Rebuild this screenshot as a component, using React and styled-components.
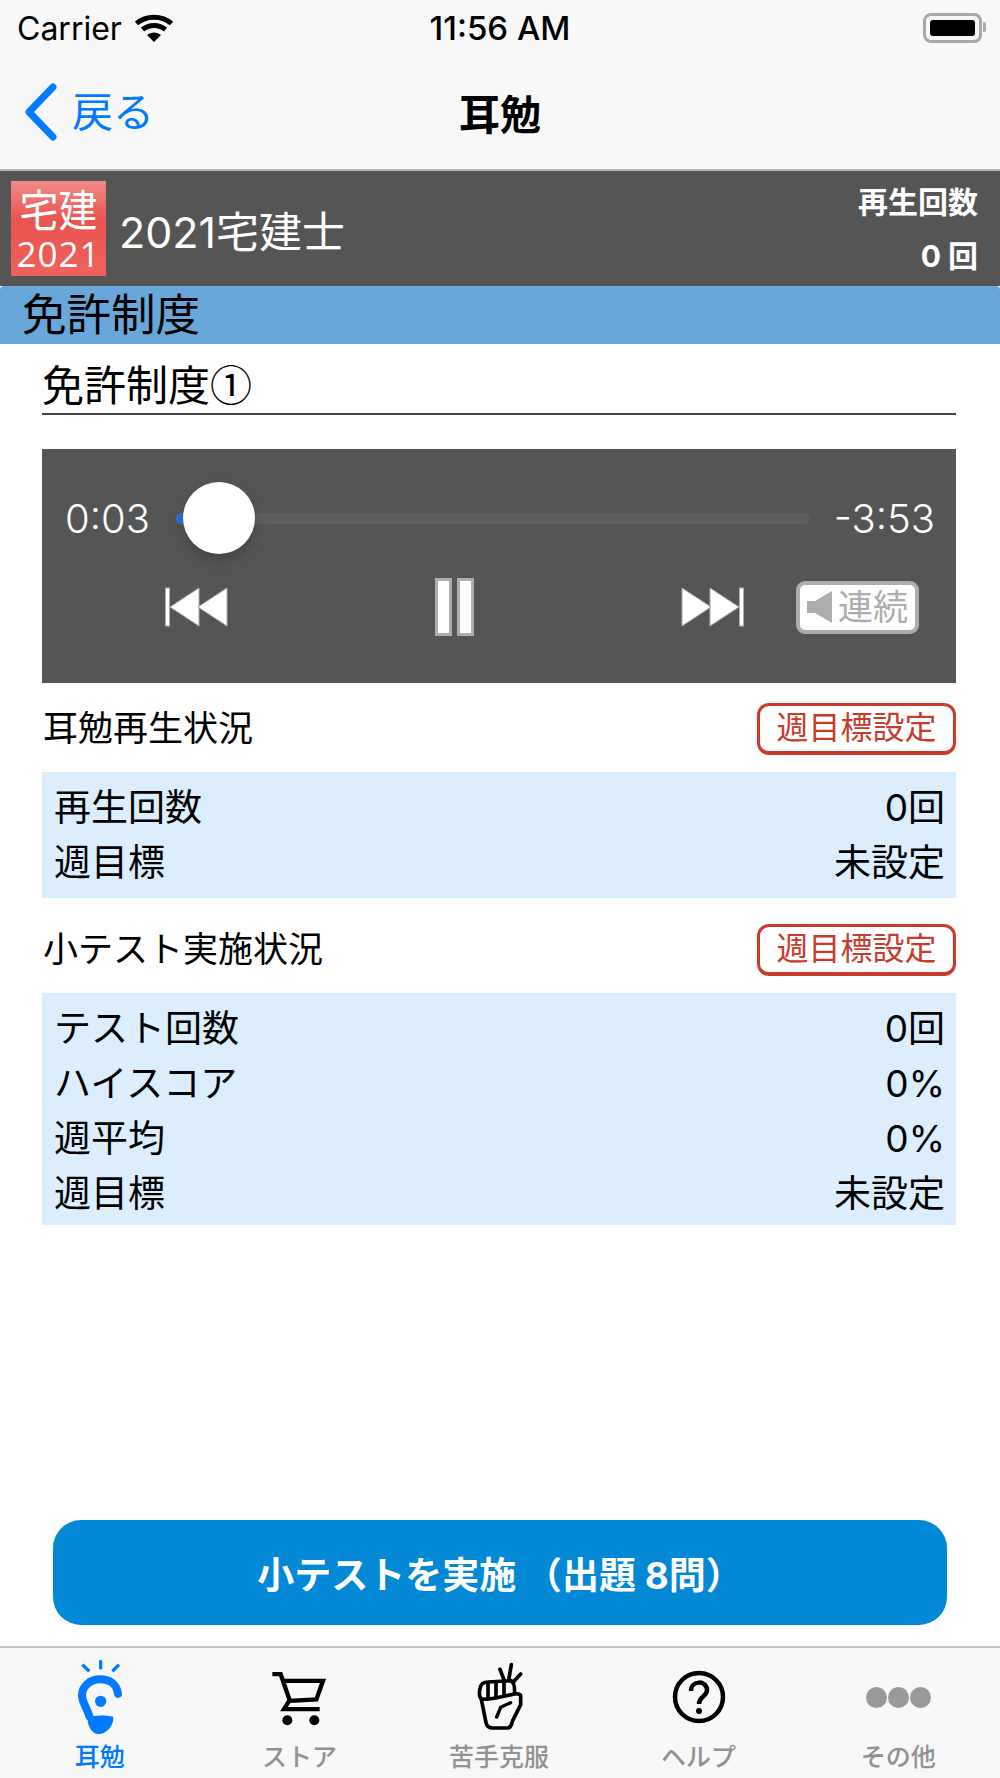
import styled, { createGlobalStyle } from 'styled-components'

const GlobalStyle = createGlobalStyle`
  html, body {
    margin: 0;
    padding: 0;
    background: #fff;
  }
  * {
    box-sizing: border-box;
  }
`

const Page = styled.div`
  width: 1000px;
  height: 1778px;
  display: flex;
  flex-direction: column;
  overflow: hidden;
  background: #fff;
  color: #000;
  font-family: Inter, "Noto Sans CJK JP", sans-serif;
`

const TopBars = styled.header`
  height: 171px;
  background: #f8f8f8;
  border-bottom: 2px solid #b4b4b4;
  flex-shrink: 0;
`

const StatusBar = styled.div`
  height: 56px;
  padding: 0 17px 0;
  display: grid;
  grid-template-columns: 1fr auto 1fr;
  align-items: center;
`

const Carrier = styled.div`
  display: flex;
  align-items: center;
  gap: 12px;
  font-size: 32px;
`

const Clock = styled.div`
  font-size: 33px;
  font-weight: 500;
`

const Battery = styled.div`
  justify-self: end;
  width: 59px;
  height: 30px;
  margin-right: 1px;
  padding: 4px;
  border: 3px solid #a8a8a8;
  border-radius: 8px;
  position: relative;

  &::before {
    content: "";
    display: block;
    height: 100%;
    background: #000;
    border-radius: 3px;
  }
  &::after {
    content: "";
    position: absolute;
    top: 6px;
    right: -7px;
    width: 3px;
    height: 10px;
    background: #a8a8a8;
    border-radius: 0 2px 2px 0;
  }
`

const NavBar = styled.nav`
  height: 112px;
  padding: 0 0 0 24px;
  display: grid;
  grid-template-columns: 1fr auto 1fr;
  align-items: center;
`

const BackLink = styled.div`
  display: flex;
  align-items: center;
  gap: 14px;
  color: #007aff;
  font-size: 41px;
  line-height: 1;
`

const NavTitle = styled.div`
  font-size: 41px;
  font-weight: 700;
  margin-left: -24px;
`

const BookBar = styled.div`
  height: 115px;
  padding: 9px 22px 10px 11px;
  background: #555;
  color: #fff;
  display: flex;
  align-items: center;
  flex-shrink: 0;
`

const Badge = styled.div`
  width: 95px;
  height: 95px;
  padding-top: 4px;
  background: linear-gradient(#f08a86 0%, #e9544f 42%, #ee625d 100%);
  display: flex;
  flex-direction: column;
  align-items: center;
  color: #fff;
`

const BadgeKanji = styled.div`
  font-size: 39px;
  line-height: 52px;
  transform: scaleY(1.14);
`

const BadgeYear = styled.div`
  font-family: "Open Sans", sans-serif;
  font-size: 35px;
  line-height: 34px;
  letter-spacing: 1px;
`

const BookName = styled.div`
  margin-left: 13px;
  padding-top: 1px;
  font-size: 43px;
  flex: 1;
`

const PlayCount = styled.div`
  display: flex;
  flex-direction: column;
  align-items: flex-end;
  gap: 16px;
  font-size: 30px;
  font-weight: 700;
  line-height: 38px;
  margin-top: 2px;
`

const GroupBar = styled.div`
  height: 58px;
  padding-left: 22px;
  background: #69a7da;
  border-radius: 4px 4px 0 0;
  font-size: 44.5px;
  line-height: 58px;
  flex-shrink: 0;
`

const Main = styled.main`
  flex: 1;
  padding: 0 44px 0 42px;
  display: flex;
  flex-direction: column;
`

const LessonTitle = styled.h1`
  height: 71px;
  margin: 0;
  padding-top: 8px;
  border-bottom: 2px solid #444;
  font-family: "Noto Sans CJK JP", sans-serif;
  font-size: 42px;
  font-weight: 400;
  line-height: 62px;
`

const Player = styled.section`
  height: 234px;
  margin-top: 34px;
  background: #555;
  color: #fff;
`

const SeekRow = styled.div`
  height: 105px;
  padding: 33px 21px 0 23px;
  display: flex;
  align-items: center;
`

const TimeText = styled.div`
  font-size: 40px;
  font-weight: 300;
  white-space: nowrap;
`

const Track = styled.div`
  flex: 1;
  height: 11px;
  margin: 0 24px 0 26px;
  border-radius: 6px;
  background: #5e5e60;
  position: relative;

  &::before {
    content: "";
    position: absolute;
    left: 0;
    top: 0;
    width: 14px;
    height: 100%;
    border-radius: 6px 0 0 6px;
    background: #2f6fe0;
  }
`

const Thumb = styled.div`
  position: absolute;
  left: 7px;
  top: -31px;
  width: 72px;
  height: 72px;
  border-radius: 50%;
  background: #fff;
  box-shadow: 0 6px 14px rgba(0, 0, 0, 0.22);
`

const Controls = styled.div`
  padding: 6px 0 0 123px;
  display: flex;
  align-items: center;
  height: 100px;
`

const ControlIcon = styled.svg`
  display: block;
  flex-shrink: 0;
  margin-left: ${(props) => props.$gap || 0}px;
`

const RepeatButton = styled.div`
  width: 123px;
  height: 53px;
  margin-left: 52px;
  border: 4px solid #adadad;
  border-radius: 9px;
  background: #fff;
  color: #adadad;
  display: flex;
  align-items: center;
  justify-content: center;
  gap: 5px;
  font-size: 35px;
  line-height: 1;
`

const StatusSection = styled.section`
  margin-top: ${(props) => props.$top || 0}px;
`

const SectionHead = styled.div`
  padding: 17px 0 15px 1px;
  display: flex;
  align-items: center;
  justify-content: space-between;
  font-size: 35px;

  & > span {
    padding-bottom: 6px;
  }
`

const GoalButton = styled.div`
  width: 199px;
  height: 52px;
  border: 3px solid #c93c2d;
  border-bottom-width: 4px;
  border-radius: 12px;
  background: #fff;
  color: #c93c2d;
  font-size: 32px;
  line-height: 44px;
  text-align: center;
`

const StatTable = styled.div`
  padding: 8px 11px ${(props) => props.$tail}px 12px;
  background: #dceefe;
`

const StatRow = styled.div`
  height: 55px;
  display: flex;
  align-items: center;
  justify-content: space-between;
  font-size: 37px;
  line-height: 55px;
`

const QuizButton = styled.button`
  width: 894px;
  height: 105px;
  margin: auto 0 21px 11px;
  border: 0;
  border-radius: 28px;
  background: #0388d6;
  color: #fff;
  font-family: inherit;
  font-size: 37px;
  font-weight: 700;
`

const TabBar = styled.footer`
  height: 132px;
  padding-right: 2px;
  background: #f8f8f8;
  border-top: 2px solid #c4c4c4;
  display: flex;
  flex-shrink: 0;
`

const Tab = styled.div`
  flex: 1;
  padding-top: 9px;
  display: flex;
  flex-direction: column;
  align-items: center;
  color: ${(props) => (props.$active ? '#007aff' : '#929292')};
`

const TabIcon = styled.div`
  height: 80px;
  display: flex;
  align-items: center;
  justify-content: center;
`

const TabLabel = styled.div`
  margin-top: 5px;
  font-size: 25px;
  font-weight: 500;
  line-height: 30px;
`

const Dots = styled.div`
  display: flex;
  gap: 1px;

  span {
    width: 21px;
    height: 21px;
    border-radius: 50%;
    background: #999;
  }
`

function WifiIcon() {
  return (
    <svg width="40" height="30" viewBox="0 0 40 30" fill="none" stroke="#000" strokeWidth="5">
      <path d="M2.5 10.5C12 2 28 2 37.5 10.5" />
      <path d="M8.5 16.5C15 11 25 11 31.5 16.5" />
      <path d="M20 29L13 22C17 18.6 23 18.6 27 22Z" fill="#000" stroke="none" />
    </svg>
  )
}

function ChevronIcon() {
  return (
    <svg width="34" height="58" viewBox="0 0 34 58" fill="none" stroke="#007aff" strokeWidth="7" strokeLinecap="round" strokeLinejoin="round">
      <path d="M29 4L5 29L29 54" />
    </svg>
  )
}

function SkipIcon({ flip, gap }) {
  return (
    <ControlIcon $gap={gap} width="64" height="40" viewBox="0 0 64 40" fill="#fff" stroke="#adadad" strokeWidth="1">
      <g transform={flip ? 'translate(64 0) scale(-1 1)' : undefined}>
        <rect x="0.5" y="1" width="4" height="38" />
        <path d="M5 20L34 1V39Z" />
        <path d="M33 20L62 1V39Z" />
      </g>
    </ControlIcon>
  )
}

function PauseIcon({ gap }) {
  return (
    <ControlIcon $gap={gap} width="39" height="58" viewBox="0 0 39 58" fill="#fff" stroke="#adadad" strokeWidth="3">
      <rect x="1.5" y="1.5" width="14" height="55" />
      <rect x="23.5" y="1.5" width="14" height="55" />
    </ControlIcon>
  )
}

function SpeakerIcon() {
  return (
    <svg width="26" height="32" viewBox="0 0 26 32" fill="#adadad">
      <path d="M0 10H8L25 0V32L8 22H0Z" />
    </svg>
  )
}

function EarIcon() {
  return (
    <svg width="50" height="80" viewBox="75 55 150 240" fill="none" stroke="#007aff">
      <path d="M97 78L118 98M152 65V92M207 78L187 98" strokeWidth="10" />
      <path d="M204 165C200 135 177 122 150 122C118 122 96 145 96 170C96 192 110 205 118 232" strokeWidth="24" strokeLinecap="round" />
      <circle cx="152" cy="188" r="17" fill="#007aff" stroke="none" />
      <path d="M113 238C135 228 165 230 190 234C192 262 168 286 146 286C125 286 112 262 113 238Z" fill="#007aff" stroke="none" />
    </svg>
  )
}

function CartIcon() {
  return (
    <svg width="60" height="57" viewBox="650 85 180 170" fill="none" stroke="#000" strokeWidth="13">
      <path d="M660 100H685L712 178L695 205H802" />
      <path d="M688 120H812L792 176L712 180" />
      <circle cx="705" cy="238" r="15" fill="#000" stroke="none" />
      <circle cx="786" cy="238" r="15" fill="#000" stroke="none" />
    </svg>
  )
}

function HandIcon() {
  return (
    <svg width="50" height="70" viewBox="100 70 150 210" fill="none" stroke="#000" strokeWidth="11" strokeLinejoin="round" strokeLinecap="round">
      <path d="M192 128L178 92M204 125L212 78M216 132L240 106" />
      <path d="M124 182C116 178 115 165 118 150C120 136 130 130 142 130L212 126C220 128 222 145 222 165" />
      <path d="M142 132V178M166 130V176M190 128V172" />
      <path d="M122 182L136 252C138 262 146 268 156 268H200C210 268 213 260 215 248L240 198V172C240 164 224 164 212 168L165 178C150 181 135 182 122 182Z" />
      <path d="M168 235L180 206L210 192" strokeWidth="10" />
    </svg>
  )
}

function HelpIcon() {
  return (
    <svg width="54" height="54" viewBox="0 0 54 54" fill="none" stroke="#000" strokeWidth="4.5">
      <circle cx="27" cy="27" r="24" />
      <path d="M19 21C19 10 35 10 35 20C35 27 27 26 27 34" />
      <circle cx="27" cy="41" r="3" fill="#000" stroke="none" />
    </svg>
  )
}

function StatusBlock({ title, rows, top, tail }) {
  return (
    <StatusSection $top={top}>
      <SectionHead>
        <span>{title}</span>
        <GoalButton>週目標設定</GoalButton>
      </SectionHead>
      <StatTable $tail={tail}>
        {rows.map(([label, value]) => (
          <StatRow key={label}>
            <span>{label}</span>
            <span>{value}</span>
          </StatRow>
        ))}
      </StatTable>
    </StatusSection>
  )
}

const tabs = [
  { label: '耳勉', icon: <EarIcon />, active: true },
  { label: 'ストア', icon: <CartIcon /> },
  { label: '苦手克服', icon: <HandIcon /> },
  { label: 'ヘルプ', icon: <HelpIcon /> },
  { label: 'その他', icon: <Dots><span /><span /><span /></Dots> },
]

export default function App() {
  return (
    <Page>
      <GlobalStyle />
      <TopBars>
        <StatusBar>
          <Carrier>
            <span>Carrier</span>
            <WifiIcon />
          </Carrier>
          <Clock>11:56 AM</Clock>
          <Battery />
        </StatusBar>
        <NavBar>
          <BackLink>
            <ChevronIcon />
            <span>戻る</span>
          </BackLink>
          <NavTitle>耳勉</NavTitle>
        </NavBar>
      </TopBars>

      <BookBar>
        <Badge>
          <BadgeKanji>宅建</BadgeKanji>
          <BadgeYear>2021</BadgeYear>
        </Badge>
        <BookName>2021宅建士</BookName>
        <PlayCount>
          <span>再生回数</span>
          <span>0 回</span>
        </PlayCount>
      </BookBar>
      <GroupBar>免許制度</GroupBar>

      <Main>
        <LessonTitle>免許制度①</LessonTitle>
        <Player>
          <SeekRow>
            <TimeText>0:03</TimeText>
            <Track>
              <Thumb />
            </Track>
            <TimeText>-3:53</TimeText>
          </SeekRow>
          <Controls>
            <SkipIcon />
            <PauseIcon gap={206} />
            <SkipIcon flip gap={206} />
            <RepeatButton>
              <SpeakerIcon />
              <span>連続</span>
            </RepeatButton>
          </Controls>
        </Player>

        <StatusBlock
          title="耳勉再生状況"
          tail={8}
          rows={[['再生回数', '0回'], ['週目標', '未設定']]}
        />
        <StatusBlock
          title="小テスト実施状況"
          top={6}
          tail={4}
          rows={[['テスト回数', '0回'], ['ハイスコア', '0%'], ['週平均', '0%'], ['週目標', '未設定']]}
        />

        <QuizButton>小テストを実施 （出題 8問）</QuizButton>
      </Main>

      <TabBar>
        {tabs.map((tab) => (
          <Tab key={tab.label} $active={tab.active}>
            <TabIcon>{tab.icon}</TabIcon>
            <TabLabel>{tab.label}</TabLabel>
          </Tab>
        ))}
      </TabBar>
    </Page>
  )
}
